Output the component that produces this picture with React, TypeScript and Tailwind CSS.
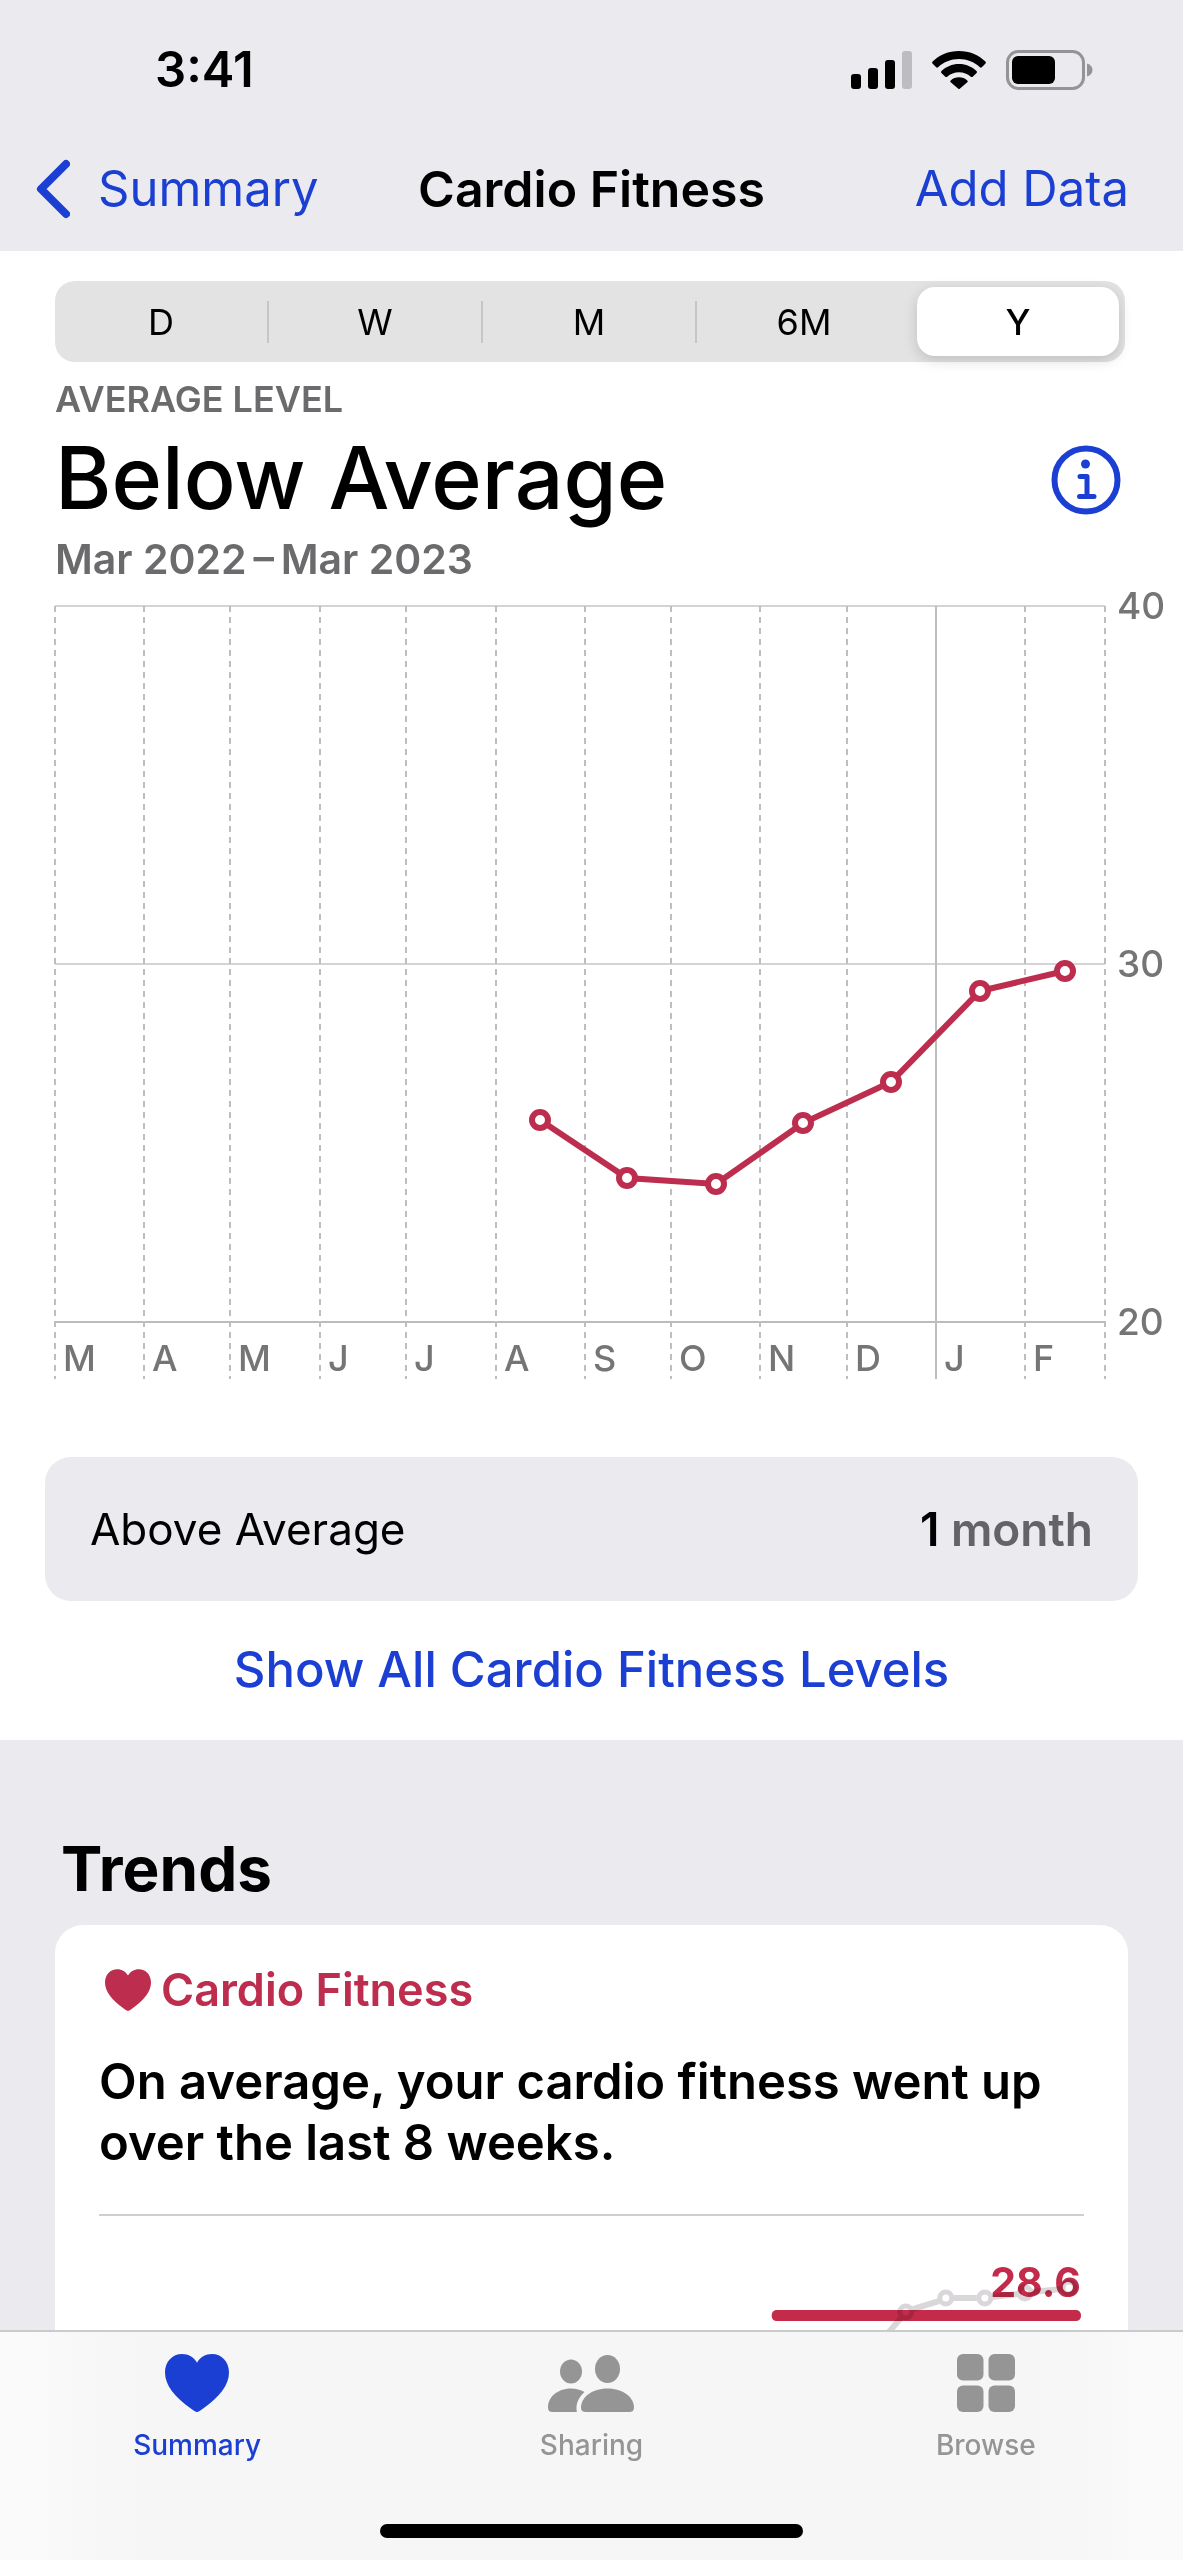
import type { ReactNode } from "react";

interface Point {
  x: number;
  y: number;
}

interface Tick {
  x: number;
  label?: string;
  solid?: boolean;
}

interface TabProps {
  label: string;
  icon: ReactNode;
  active?: boolean;
}

const ranges = ["D", "W", "M", "6M", "Y"];

const ticks: Tick[] = [
  { x: 55, label: "M" },
  { x: 144, label: "A" },
  { x: 230, label: "M" },
  { x: 320, label: "J" },
  { x: 406, label: "J" },
  { x: 496, label: "A" },
  { x: 585, label: "S" },
  { x: 671, label: "O" },
  { x: 760, label: "N" },
  { x: 847, label: "D" },
  { x: 936, label: "J", solid: true },
  { x: 1025, label: "F" },
  { x: 1105 },
];

const levels = [
  { y: 26, label: "40" },
  { y: 384, label: "30" },
  { y: 742, label: "20" },
];

const readings: Point[] = [
  { x: 540, y: 540 },
  { x: 627, y: 598 },
  { x: 716, y: 604 },
  { x: 803, y: 543 },
  { x: 891, y: 502 },
  { x: 980, y: 411 },
  { x: 1065, y: 391 },
];

const toPoints = (points: Point[]) => points.map((p) => `${p.x},${p.y}`).join(" ");

const HeartIcon = ({ className }: { className?: string }) => (
  <svg viewBox="0 0 64 58" fill="currentColor" className={className} aria-hidden="true">
    <path d="M32 58C30.500 58 28.500 56.500 26.500 55C9.500 43 0 31 0 18.500C0 7.500 7.500 0 17 0C23.500 0 29 3.300 32 8.800C35 3.300 40.500 0 47 0C56.500 0 64 7.500 64 18.500C64 31 54.500 43 37.500 55C35.500 56.500 33.500 58 32 58Z" />
  </svg>
);

const PeopleIcon = () => (
  <svg viewBox="0 0 86 57" fill="currentColor" className="h-[57px] w-[86px]" aria-hidden="true">
    <ellipse cx="23" cy="16.500" rx="11" ry="12" />
    <ellipse cx="59.500" cy="14" rx="12.500" ry="14" />
    <path d="M29 57H4.500C1.500 57 0 55.500 0 52.500C0 42.500 9 33.500 23 33.500C28 33.500 32.500 34.800 36.500 37C31.500 41.500 28.500 47 28.500 53C28.500 54.500 28.600 56 29 57Z" />
    <path d="M38 57C34.500 57 33 55.500 33 52.500C33 43 43 33.500 59.500 33.500C76 33.500 86 43 86 52.500C86 55.500 84.500 57 81 57Z" />
  </svg>
);

const GridIcon = () => (
  <svg viewBox="0 0 58 58" fill="currentColor" className="size-[58px]" aria-hidden="true">
    <rect width="26.500" height="26.500" rx="6" />
    <rect x="31.500" width="26.500" height="26.500" rx="6" />
    <rect y="31.500" width="26.500" height="26.500" rx="6" />
    <rect x="31.500" y="31.500" width="26.500" height="26.500" rx="6" />
  </svg>
);

const StatusBar = () => (
  <div className="flex h-[140px] items-center justify-between pr-[90px] pl-[155px]">
    <span className="text-[49px] leading-[56px] font-semibold">3:41</span>
    <div className="flex items-center gap-5">
      <svg viewBox="0 0 61 38" className="h-[38px] w-[61px]" aria-hidden="true">
        <rect y="23" width="10" height="15" rx="3" />
        <rect x="17" y="17" width="10" height="21" rx="3" />
        <rect x="34" y="9" width="10" height="29" rx="3" />
        <rect x="51" width="10" height="38" rx="3" fill="#bdbdc0" />
      </svg>
      <svg viewBox="0 0 54 38" className="h-[38px] w-[54px]" aria-hidden="true">
        <path d="M27 0C37.500 0 46.500 4 53.400 10.500C54 11.100 54 11.800 53.500 12.400L49.800 16.200C49.300 16.800 48.500 16.800 47.900 16.200C42.300 11 35 8 27 8C19 8 11.700 11 6.100 16.200C5.500 16.800 4.700 16.800 4.200 16.200L0.500 12.400C0 11.800 0 11.100 0.600 10.500C7.500 4 16.500 0 27 0Z" />
        <path d="M27 13C34 13 40 15.700 44.500 20C45.100 20.600 45.100 21.300 44.600 21.900L40.700 25.700C40.100 26.300 39.400 26.200 38.800 25.700C35.600 22.800 31.500 21.200 27 21.200C22.500 21.200 18.400 22.800 15.200 25.700C14.600 26.200 13.900 26.300 13.300 25.700L9.400 21.900C8.900 21.300 8.900 20.600 9.500 20C14 15.700 20 13 27 13Z" />
        <path d="M27 26.300C30.200 26.300 33.100 27.500 35.300 29.400C35.900 30 35.900 30.600 35.300 31.200L28 37.600C27.400 38.200 26.600 38.200 26 37.600L18.700 31.200C18.100 30.600 18.100 30 18.700 29.400C20.900 27.500 23.800 26.300 27 26.300Z" />
      </svg>
      <svg viewBox="0 0 87 40" className="h-[40px] w-[87px]" aria-hidden="true">
        <rect x="1.500" y="1.500" width="76" height="37" rx="11" fill="none" stroke="#949497" strokeWidth="3" />
        <rect x="6" y="6" width="43" height="28" rx="6" />
        <path d="M81 13.500C84.500 14.500 86.500 17 86.500 20C86.500 23 84.500 25.500 81 26.500Z" fill="#949497" />
      </svg>
    </div>
  </div>
);

const NavBar = () => (
  <nav className="grid grid-cols-[1fr_auto_1fr] items-center px-9 pt-[18px] pb-[31px] text-[49px] leading-[62px]">
    <a href="#summary" className="flex items-center gap-7 text-[#1b3fd2]">
      <svg viewBox="0 0 34 60" className="h-[60px] w-[34px]" fill="none" stroke="currentColor" strokeWidth="8" strokeLinecap="round" strokeLinejoin="round" aria-hidden="true">
        <path d="M30 5L5 30L30 55" />
      </svg>
      Summary
    </a>
    <h1 className="text-[50px] leading-[62px] font-semibold">Cardio Fitness</h1>
    <a href="#add" className="justify-self-end pr-[18px] text-[#1b3fd2]">
      Add Data
    </a>
  </nav>
);

const RangePicker = () => (
  <div className="flex h-[81px] rounded-[20px] bg-[#e3e3e3] text-[36px] leading-[44px]">
    {ranges.map((range, i) => (
      <button
        key={range}
        type="button"
        aria-pressed={range === "Y"}
        className={
          range === "Y"
            ? "m-[6px] flex-1 rounded-[18px] bg-white font-medium shadow-[0_4px_14px_rgba(0,0,0,0.16)]"
            : "flex flex-[0_0_20%] items-center"
        }
      >
        <span className="flex-1">{range}</span>
        {i < 3 && <span className="h-[42px] w-[2px] bg-[#c6c6c8]" />}
      </button>
    ))}
  </div>
);

const FitnessChart = () => (
  <svg viewBox="0 4 1183 796" className="block w-full" role="img" aria-label="Cardio fitness by month">
    {levels.map((level) => (
      <g key={level.label}>
        <line x1="55" x2="1105" y1={level.y} y2={level.y} stroke={level.y === 742 ? "#bcbcbc" : "#d4d4d4"} strokeWidth="2" />
        <text x="1117" y={level.y + 13} fontSize="37" fontWeight="500" fill="#757575">
          {level.label}
        </text>
      </g>
    ))}
    {ticks.map((tick) => (
      <g key={tick.x}>
        <line
          x1={tick.x}
          x2={tick.x}
          y1="26"
          y2="799"
          stroke="#bebebe"
          strokeWidth="2"
          strokeDasharray={tick.solid ? undefined : "6 5"}
        />
        <text x={tick.x + 8} y="791" fontSize="36" fontWeight="500" fill="#757575">
          {tick.label}
        </text>
      </g>
    ))}
    <polyline points={toPoints(readings)} fill="none" stroke="#bd2d4e" strokeWidth="6" />
    {readings.map((p) => (
      <circle key={p.x} cx={p.x} cy={p.y} r="8" fill="white" stroke="#bd2d4e" strokeWidth="6" />
    ))}
  </svg>
);

const TrendChart = () => {
  const dots: Point[] = [
    { x: 806, y: 96 },
    { x: 846, y: 82 },
    { x: 885, y: 82 },
    { x: 925, y: 77 },
    { x: 969, y: 72 },
  ];

  return (
    <svg viewBox="0 0 984 114" className="block w-full" role="img" aria-label="Average 28.6">
      <rect x="672" y="94" width="309" height="11" rx="5" fill="#c42b4a" />
      <text x="981" y="81" textAnchor="end" fontSize="41" fontWeight="700" fill="#c42b4a">
        28.6
      </text>
      <g className="mix-blend-multiply" fill="none" stroke="#d9d7d9" strokeWidth="6">
        <path d="M789 116L801 102M813 93L839 85M853 82H877M892 81L918 78M932 76L962 73" />
        {dots.map((p) => (
          <circle key={p.x} cx={p.x} cy={p.y} r="6" strokeWidth="5" />
        ))}
      </g>
    </svg>
  );
};

const Tab = ({ label, icon, active }: TabProps) => (
  <a
    href={`#${label.toLowerCase()}`}
    className={active ? "flex flex-col items-center gap-4 text-[#1b3fd2]" : "flex flex-col items-center gap-4 text-[#959595]"}
  >
    <span className="flex h-[58px] items-center">{icon}</span>
    <span className="text-[28px] leading-[34px] font-medium">{label}</span>
  </a>
);

const App = () => {
  return (
    <div className="flex min-h-screen flex-col bg-[#ebeaef] font-['Inter',sans-serif] text-black">
      <header>
        <StatusBar />
        <NavBar />
      </header>

      <section className="bg-white pt-[30px]">
        <div className="pr-[58px] pl-[55px]">
          <RangePicker />
          <div className="flex items-center justify-between pt-[14px] pr-1">
            <div>
              <p className="text-[36px] leading-[46px] font-semibold text-[#6b6b6d]">AVERAGE LEVEL</p>
              <h2 className="text-[86px] leading-[112px] font-medium">Below Average</h2>
              <p className="text-[41px] leading-[50px] font-semibold text-[#6b6b6d]">Mar 2022{"\u2009"}–{"\u2009"}Mar 2023</p>
            </div>
            <button type="button" aria-label="About cardio fitness" className="text-[#1b3fd2]">
              <svg viewBox="0 0 70 70" className="size-[70px]" fill="none" stroke="currentColor" aria-hidden="true">
                <circle cx="35" cy="35" r="31.500" strokeWidth="6" />
                <circle cx="34.500" cy="19" r="4.500" fill="currentColor" stroke="none" />
                <path d="M29 31.500H36V51M28.500 51.500H43" strokeWidth="5" strokeLinecap="round" strokeLinejoin="round" />
              </svg>
            </button>
          </div>
        </div>

        <FitnessChart />

        <div className="px-[45px] pt-[77px]">
          <div className="flex h-[144px] items-center justify-between rounded-[26px] bg-[#ebeaef] px-[45px] text-[46px] leading-[56px]">
            <span className="text-[44px]">Above Average</span>
            <span className="font-semibold">
              1 <span className="text-[#646468]">month</span>
            </span>
          </div>
        </div>

        <div className="flex justify-center pt-[38px] pb-[39px]">
          <a href="#levels" className="text-[49px] leading-[62px] font-medium text-[#1b3fd2]">
            Show All Cardio Fitness Levels
          </a>
        </div>
      </section>

      <section className="flex flex-1 flex-col px-[55px] pt-[90px]">
        <h2 className="px-[6px] text-[62px] leading-[78px] font-bold">Trends</h2>
        <article className="mt-[17px] flex-1 rounded-t-[28px] bg-white px-[44px] pt-9">
          <h3 className="flex items-center gap-[10px] pl-[6px] text-[45px] leading-[58px] font-semibold text-[#bd2d4e]">
            <HeartIcon className="h-[42px] w-[46px]" />
            Cardio Fitness
          </h3>
          <p className="border-b-2 border-[#cfcfd1] pt-[32px] pb-[41px] text-[49px] leading-[61px] font-semibold">
            On average, your cardio fitness went up over the last 8 weeks.
          </p>
          <TrendChart />
        </article>
      </section>

      <footer className="sticky bottom-0 border-t-2 border-[#cacccb] bg-[linear-gradient(to_right,#fafafa_2%,#f6f6f6_12%,#f6f6f6_88%,#fafafa_98%)] pt-[22px] pb-[22px]">
        <nav className="grid grid-cols-3">
          <Tab label="Summary" icon={<HeartIcon className="h-[58px] w-[64px]" />} active />
          <Tab label="Sharing" icon={<PeopleIcon />} />
          <Tab label="Browse" icon={<GridIcon />} />
        </nav>
        <div className="mx-auto mt-[62px] h-[14px] w-[423px] rounded-full bg-black" />
      </footer>
    </div>
  );
};

export default App;
